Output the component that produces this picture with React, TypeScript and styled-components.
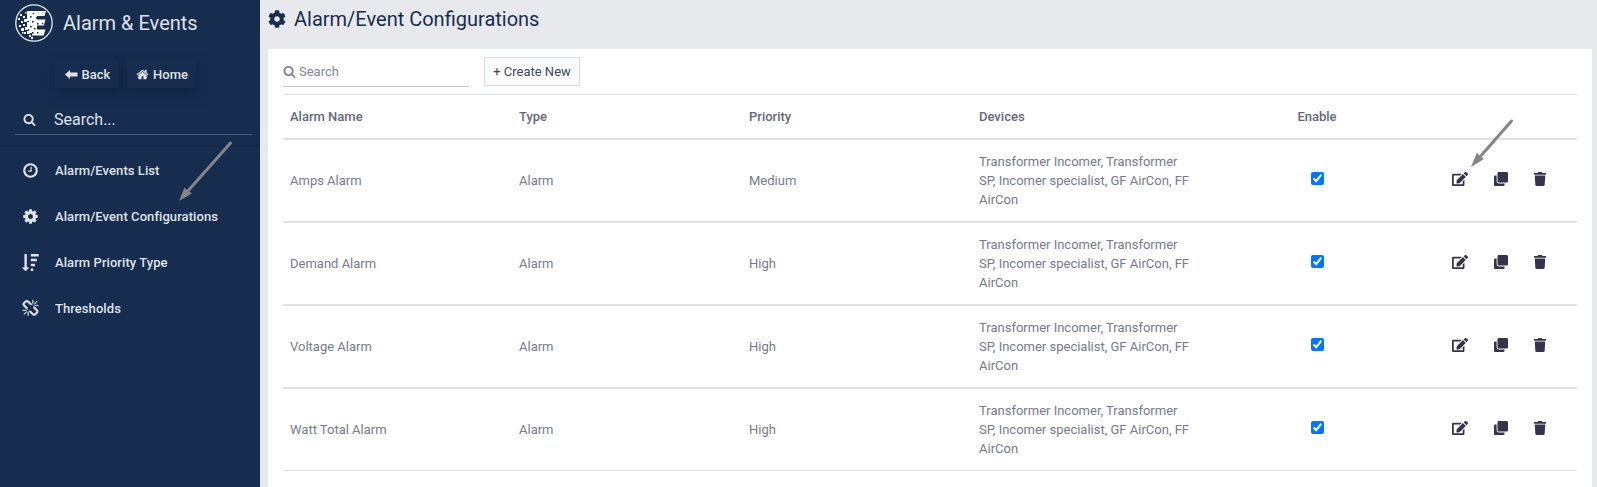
import React from "react";
import styled, { createGlobalStyle } from "styled-components";
import { FaCog, FaEdit, FaClone, FaTrash } from "react-icons/fa";

const GlobalStyle = createGlobalStyle`
  * { box-sizing: border-box; }
  body {
    margin: 0;
    background: #e8e9ed;
    font-family: Roboto, "Liberation Sans", sans-serif;
    font-size: 13px;
    overflow: hidden;
  }
`;

const Page = styled.div`
  position: relative;
  display: flex;
  height: 487px;
  overflow: hidden;
`;

const Sidebar = styled.aside`
  width: 260px;
  flex: none;
  background: #162d50;
  color: #dfe2e8;
`;

const Brand = styled.div`
  display: flex;
  align-items: center;
  gap: 10px;
  height: 46px;
  padding-left: 15px;
  font-size: 20px;
`;

const NavButtons = styled.div`
  display: flex;
  gap: 8px;
  padding: 14px 0 0 55px;
  height: 57px;
`;

const NavButton = styled.button<{ $width: number }>`
  display: flex;
  align-items: center;
  justify-content: center;
  gap: 4px;
  width: ${(p) => p.$width}px;
  height: 28px;
  padding: 0 0 0 1px;
  border: 0;
  background: #162d50;
  color: inherit;
  font: 500 13px Roboto, sans-serif;
  box-shadow: 0 6px 14px rgba(17, 32, 58, 0.6);
`;

const SideSearch = styled.div`
  display: flex;
  align-items: center;
  gap: 18px;
  height: 32px;
  margin: 0 8px 0 15px;
  padding: 1px 0 0 8px;
  border-bottom: 1px solid #485a76;
  font-size: 16px;
`;

const Divider = styled.div`
  height: 12px;
  background: linear-gradient(#162d50 75%, #14294a);
`;

const Menu = styled.nav`
  display: flex;
  flex-direction: column;
  background: #162d50;
`;

const MenuItem = styled.a`
  display: flex;
  align-items: center;
  gap: 16px;
  height: 46px;
  padding-left: 22px;
  font-weight: 500;
  letter-spacing: 0.07px;
`;

const Main = styled.main`
  flex: 1;
  display: flex;
  flex-direction: column;
  padding: 0 5px 0 8px;
`;

const PageTitle = styled.h1`
  display: flex;
  align-items: center;
  gap: 8px;
  height: 49px;
  margin: 0;
  padding-bottom: 11px;
  color: #162d50;
  font-size: 20px;
  font-weight: 400;
`;

const Card = styled.section`
  flex: 1;
  padding: 8px 15px 0;
  background: #fff;
`;

const Toolbar = styled.div`
  display: flex;
  align-items: flex-start;
  gap: 15px;
  height: 37px;
`;

const SearchField = styled.div`
  display: flex;
  align-items: center;
  gap: 3px;
  width: 186px;
  height: 30px;
  border-bottom: 1px solid #c5c6d9;
  color: #82869a;
`;

const CreateButton = styled.button`
  width: 96px;
  height: 29px;
  padding: 0;
  border: 1px solid #d9dbe8;
  background: #fafbfd;
  color: #434656;
  font: 400 13px Roboto, sans-serif;
  white-space: nowrap;
`;

const Table = styled.table`
  width: 1294px;
  border-spacing: 0;
  table-layout: fixed;
  border-top: 1px solid #dfe0e6;
  color: #777a8a;
`;

const HeadCell = styled.th<{ $center?: boolean }>`
  height: 45px;
  padding: 0 7px;
  border-bottom: 2px solid #e0e1e4;
  color: #646878;
  font-weight: 500;
  text-align: ${(p) => (p.$center ? "center" : "left")};
`;

const Cell = styled.td<{ $center?: boolean }>`
  height: 83px;
  padding: 0 7px;
  border-bottom: 2px solid #e0e1e4;
  line-height: 19px;
  text-align: ${(p) => (p.$center ? "center" : "left")};
  tr:last-child > & {
    height: 82px;
    border-bottom-width: 1px;
  }
`;

const Devices = styled.div`
  width: 216px;
`;

const Check = styled.input`
  display: block;
  width: 13px;
  height: 13px;
  margin: 0 auto 5px;
`;

const Actions = styled.div`
  display: grid;
  grid-template-columns: 42px 39px 14px;
  align-items: center;
  padding: 0 0 3px 68px;
  color: #34344a;
  font-size: 14px;
`;

const Pointer = styled.svg<{ $x: number; $y: number }>`
  position: absolute;
  left: ${(p) => p.$x}px;
  top: ${(p) => p.$y}px;
  fill: #858585;
  stroke: #858585;
`;

const Glyph = styled.svg`
  display: block;
  flex: none;
  fill: currentColor;
`;

const paths = {
  search:
    "M1216 832q0-185-131.5-316.500t-316.500-131.500-316.500 131.500-131.500 316.500 131.500 316.500 316.500 131.500 316.500-131.500 131.500-316.500zm512 832q0 52-38 90t-90 38q-54 0-90-38l-343-342q-179 124-399 124-143 0-273.500-55.500t-225-150-150-225-55.500-273.500 55.500-273.500 150-225 225-150 273.500-55.500 273.500 55.500 225 150 150 225 55.500 273.500q0 220-124 399l343 343q37 37 37 90z",
  home:
    "M1472 992v480q0 26-19 45t-45 19h-384v-384h-256v384h-384q-26 0-45-19t-19-45v-480q0-1 .5-3t.5-3l575-474 575 474q1 2 1 6zm223-69l-62 74q-8 9-21 11h-3q-13 0-21-7l-692-577-692 577q-12 8-24 7-13-2-21-11l-62-74q-8-10-7-23.500t11-21.500l719-599q32-26 76-26t76 26l244 204v-195q0-14 9-23t23-9h192q14 0 23 9t9 23v408l219 182q10 8 11 21.500t-7 23.500z",
  clock:
    "M1024 544v448q0 14-9 23t-23 9h-320q-14 0-23-9t-9-23v-64q0-14 9-23t23-9h224v-352q0-14 9-23t23-9h64q14 0 23 9t9 23zm416 352q0-148-73-273t-198-198-273-73-273 73-198 198-73 273 73 273 198 198 273 73 273-73 198-198 73-273zm224 0q0 209-103 385.500t-279.500 279.500-385.500 103-385.500-103-279.500-279.500-103-385.500 103-385.500 279.500-279.500 385.500-103 385.500 103 279.500 279.500 103 385.500z",
  cog:
    "M1152 896q0-106-75-181t-181-75-181 75-75 181 75 181 181 75 181-75 75-181zm512-109v222q0 12-8 23t-20 13l-185 28q-19 54-39 91 35 50 107 138 10 12 10 25t-9 23q-27 37-99 108t-94 71q-12 0-26-9l-138-108q-44 23-91 38-16 136-29 186-7 28-36 28h-222q-14 0-24.500-8.500t-11.500-21.500l-28-184q-49-16-90-37l-141 107q-10 9-25 9-14 0-25-11-126-114-165-168-7-10-7-23 0-12 8-23 15-21 51-66.500t54-70.500q-27-50-41-99l-183-27q-13-2-21-12.500t-8-23.500v-222q0-12 8-23t19-13l186-28q14-46 39-92-40-57-107-138-10-12-10-24 0-10 9-23 26-36 98.500-107.500t94.500-71.500q13 0 26 10l138 107q44-23 91-38 16-136 29-186 7-28 36-28h222q14 0 24.500 8.500t11.500 21.500l28 184q49 16 90 37l142-107q9-9 24-9 13 0 25 10 129 119 165 170 7 8 7 22 0 12-8 23-15 21-51 66.500t-54 70.500q26 50 41 98l183 28q13 2 21 12.500t8 23.500z",
  sort:
    "M735 1440q0 12-10 24l-319 319q-10 9-23 9-12 0-23-9l-320-320q-15-16-7-35 8-20 30-20h192v-1376q0-14 9-23t23-9h192q14 0 23 9t9 23v1376h192q14 0 23 9t9 23zM960 1536h192q32 0 32 32v192q0 32-32 32h-192q-32 0-32-32v-192q0-32 32-32zM960 1024h384q32 0 32 32v192q0 32-32 32h-384q-32 0-32-32v-192q0-32 32-32zM960 512h576q32 0 32 32v192q0 32-32 32h-576q-32 0-32-32v-192q0-32 32-32zM960 0h768q32 0 32 32v192q0 32-32 32h-768q-32 0-32-32v-192q0-32 32-32z",
  unlink:
    "M503 1271l-256 256q-10 9-23 9-12 0-23-9-9-10-9-23t9-23l256-256q10-9 23-9t23 9q9 10 9 23t-9 23zm169 41v320q0 14-9 23t-23 9-23-9-9-23v-320q0-14 9-23t23-9 23 9 9 23zm-224-224q0 14-9 23t-23 9h-320q-14 0-23-9t-9-23 9-23 23-9h320q14 0 23 9t9 23zm1264 128q0 120-85 203l-147 146q-83 83-203 83-121 0-204-85l-334-335q-21-21-42-56l239-18 273 274q28 28 68 28.500t68-27.500l147-146q28-28 28-67 0-40-28-68l-274-275 18-239q35 21 56 42l336 336q84 86 84 204zm-617-724l-239 18-273-274q-28-28-68-28-39 0-68 27l-147 146q-28 28-28 67 0 40 28 68l274 274-18 240q-35-21-56-42l-336-336q-84-86-84-204 0-120 85-203l147-146q83-83 203-83 121 0 204 85l334 335q21 21 42 56zm633 84q0 14-9 23t-23 9h-320q-14 0-23-9t-9-23 9-23 23-9h320q14 0 23 9t9 23zm-544-544v320q0 14-9 23t-23 9-23-9-9-23v-320q0-14 9-23t23-9 23 9 9 23zm407 151l-256 256q-11 9-23 9t-23-9q-9-10-9-23t9-23l256-256q10-9 23-9t23 9q9 10 9 23t-9 23z",
};

const Icon = ({ name, size }: { name: keyof typeof paths; size: number }) => (
  <Glyph
    width={size}
    height={size}
    viewBox="0 0 1792 1792"
    stroke="currentColor"
    strokeWidth={name === "unlink" ? 50 : 0}
    overflow="visible"
  >
    <path d={paths[name]} />
  </Glyph>
);

const whiteBits = [
  [3, 14, 2], [5, 10, 2], [8, 12, 2], [6, 17, 2], [9, 15, 3], [4, 21, 2],
  [8, 20, 2], [6, 24, 3], [10, 23, 3], [9, 28, 2], [12, 27, 3], [12, 10, 3],
  [12, 18, 3], [14, 31, 2], [10, 8, 1.5], [16, 33, 2], [7, 28, 1.5],
];
const darkBits = [
  [15, 12, 1.6], [18, 9, 1.3], [21, 13, 1.6], [17, 17, 1.6], [22, 19, 1.6],
  [15, 22, 1.6], [19, 24, 1.5], [17, 28, 1.6], [22, 28, 1.5], [27, 19, 1.3],
];

const Logo = () => (
  <svg width="38" height="38" viewBox="0 0 38 38">
    <circle cx="19" cy="19" r="18.2" fill="none" stroke="#e9ecf1" strokeWidth="1.3" />
    <path
      fill="#fff"
      d="M12 7H31L29.500 12H22V15.500H30.500L28.800 21.500H22V25.500H30.500L28.500 31.500H17V29H14V25H12V21H14V17H12V13H14V10H12Z"
    />
    {whiteBits.map(([x, y, s]) => (
      <rect key={`${x}-${y}`} x={x} y={y} width={s} height={s} fill="#fff" />
    ))}
    {darkBits.map(([x, y, s]) => (
      <rect key={`${x}-${y}`} x={x} y={y} width={s} height={s} fill="#162d50" />
    ))}
  </svg>
);

const menu: { icon: keyof typeof paths; label: string }[] = [
  { icon: "clock", label: "Alarm/Events List" },
  { icon: "cog", label: "Alarm/Event Configurations" },
  { icon: "sort", label: "Alarm Priority Type" },
  { icon: "unlink", label: "Thresholds" },
];

const alarms = [
  ["Amps Alarm", "Medium"],
  ["Demand Alarm", "High"],
  ["Voltage Alarm", "High"],
  ["Watt Total Alarm", "High"],
];

export default function App() {
  return (
    <Page>
      <GlobalStyle />
      <Sidebar>
        <Brand>
          <Logo />
          Alarm &amp; Events
        </Brand>
        <NavButtons>
          <NavButton $width={64}>
            <Glyph width="13" height="9" viewBox="0 0 13 9">
              <path d="M0 4.500L5 0V2.500H12.500V6.500H5V9Z" />
            </Glyph>
            Back
          </NavButton>
          <NavButton $width={69}>
            <Icon name="home" size={13} />
            Home
          </NavButton>
        </NavButtons>
        <SideSearch>
          <Icon name="search" size={13} />
          Search...
        </SideSearch>
        <Divider />
        <Menu>
          {menu.map((m) => (
            <MenuItem key={m.label}>
              <Icon name={m.icon} size={17} />
              {m.label}
            </MenuItem>
          ))}
        </Menu>
      </Sidebar>
      <Main>
        <PageTitle>
          <FaCog size={18} />
          Alarm/Event Configurations
        </PageTitle>
        <Card>
          <Toolbar>
            <SearchField>
              <Icon name="search" size={13} />
              Search
            </SearchField>
            <CreateButton>+ Create New</CreateButton>
          </Toolbar>
          <Table>
            <colgroup>
              <col width="229" />
              <col width="230" />
              <col width="230" />
              <col width="285" />
              <col width="120" />
              <col width="200" />
            </colgroup>
            <thead>
              <tr>
                <HeadCell>Alarm Name</HeadCell>
                <HeadCell>Type</HeadCell>
                <HeadCell>Priority</HeadCell>
                <HeadCell>Devices</HeadCell>
                <HeadCell $center>Enable</HeadCell>
                <HeadCell />
              </tr>
            </thead>
            <tbody>
              {alarms.map(([name, priority]) => (
                <tr key={name}>
                  <Cell>{name}</Cell>
                  <Cell>Alarm</Cell>
                  <Cell>{priority}</Cell>
                  <Cell>
                    <Devices>
                      Transformer Incomer, Transformer SP, Incomer specialist, GF AirCon, FF AirCon
                    </Devices>
                  </Cell>
                  <Cell $center>
                    <Check type="checkbox" defaultChecked />
                  </Cell>
                  <Cell>
                    <Actions>
                      <FaEdit size={16} />
                      <FaClone />
                      <FaTrash />
                    </Actions>
                  </Cell>
                </tr>
              ))}
            </tbody>
          </Table>
        </Card>
      </Main>
      <Pointer $x={178} $y={140} width="56" height="64" viewBox="0 0 56 64">
        <path d="M52.500 3L9 52" strokeWidth="3" strokeLinecap="round" />
        <path d="M1 61L6.500 47.500L9 50L14 53.500Z" stroke="none" />
      </Pointer>
      <Pointer $x={1470} $y={118} width="46" height="52" viewBox="0 0 46 52">
        <path d="M41.500 3L9 40" strokeWidth="3" strokeLinecap="round" />
        <path d="M1 49L7 34.500L9.500 38L14 41Z" stroke="none" />
      </Pointer>
    </Page>
  );
}
